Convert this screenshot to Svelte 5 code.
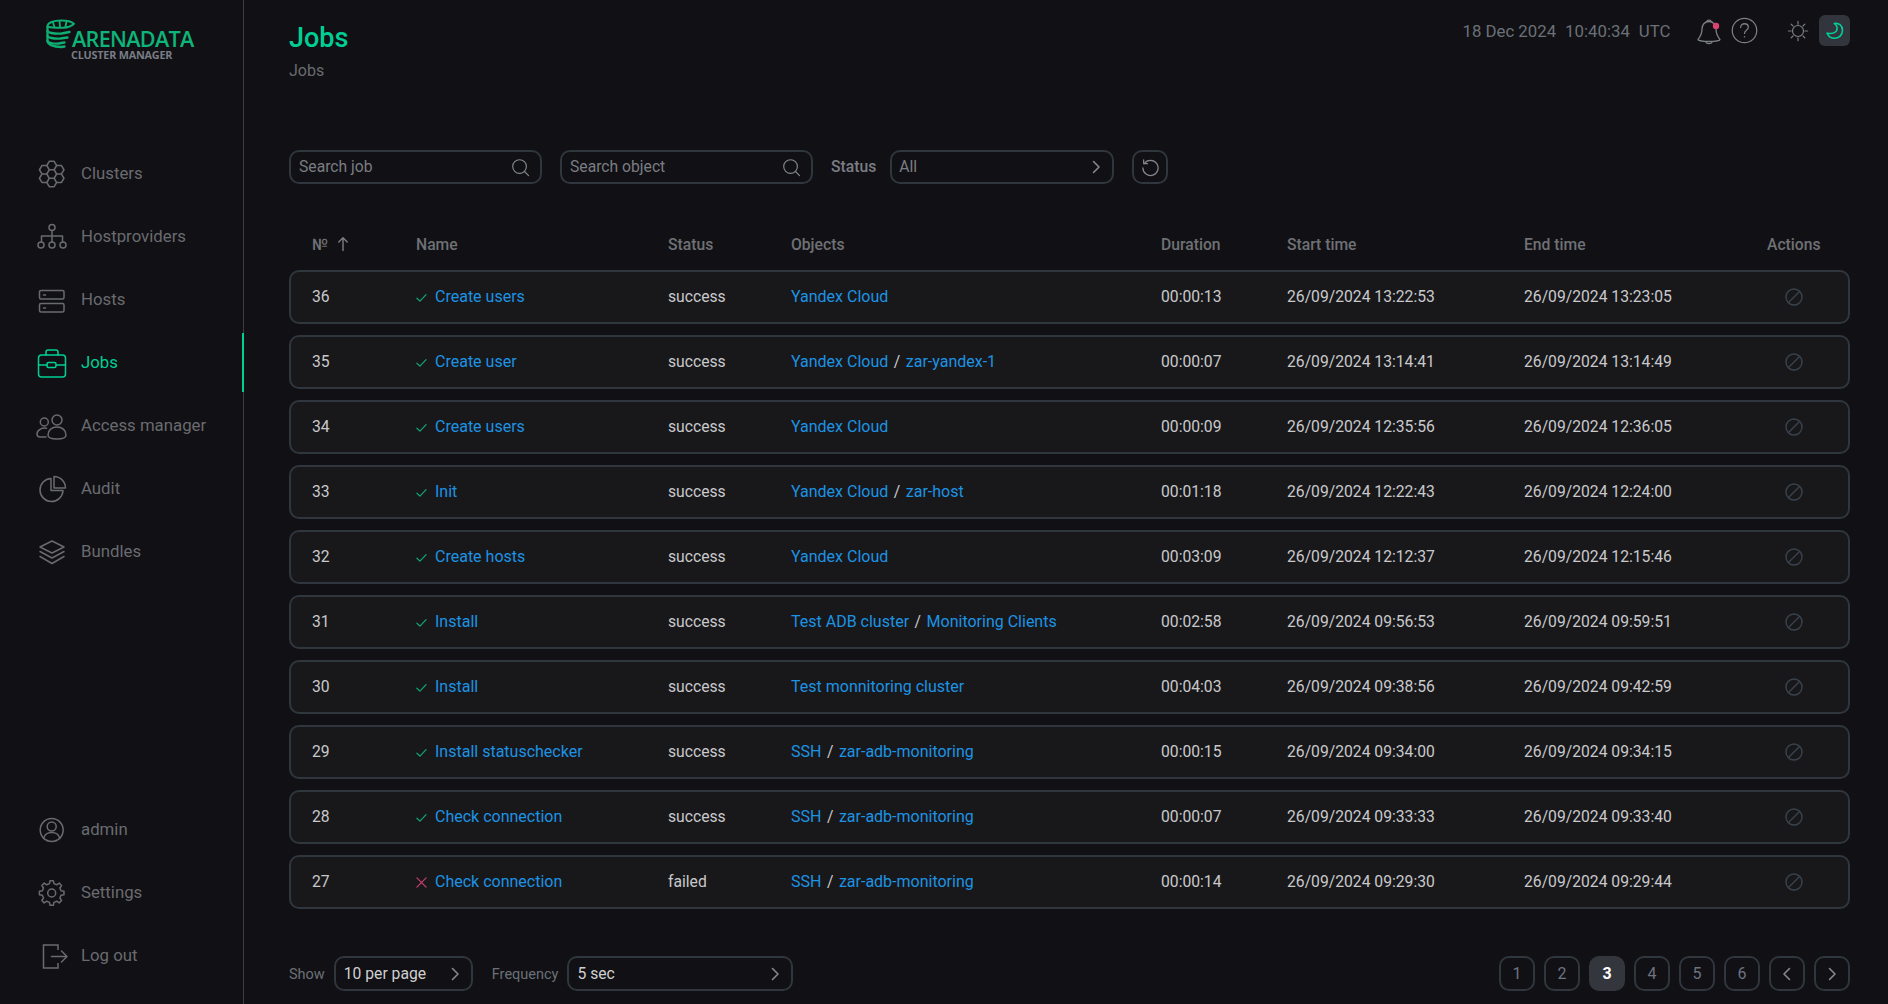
<script>
  const hex = (cx, cy, r = 4.9) => {
    const p = [];
    for (let i = 0; i < 6; i++) {
      const a = (Math.PI / 3) * i;
      p.push(`${(cx + r * Math.cos(a)).toFixed(2)} ${(cy + r * Math.sin(a)).toFixed(2)}`);
    }
    return 'M' + p.join('L') + 'Z';
  };
  const flower = [[14.7, 15], [14.7, 6.5], [14.7, 23.5], [7.35, 10.75], [22.05, 10.75], [7.35, 19.25], [22.05, 19.25]]
    .map(([x, y]) => hex(x, y)).join('');

  const gear = (() => {
    const cx = 14.7, cy = 15, n = 8, out = 12.4, inn = 9.6;
    const p = [];
    for (let i = 0; i < n; i++) {
      const s = (2 * Math.PI / n) * i - Math.PI / 2;
      const w = (2 * Math.PI / n);
      [[-0.30, inn], [-0.17, out], [0.17, out], [0.30, inn]].forEach(([t, r]) => {
        const a = s + t * w;
        p.push(`${(cx + r * Math.cos(a)).toFixed(2)} ${(cy + r * Math.sin(a)).toFixed(2)}`);
      });
    }
    return 'M' + p.join('L') + 'Z';
  })();

  const nav = [
    { label: 'Clusters', icon: 'clusters' },
    { label: 'Hostproviders', icon: 'hostproviders' },
    { label: 'Hosts', icon: 'hosts' },
    { label: 'Jobs', icon: 'jobs', active: true },
    { label: 'Access manager', icon: 'access' },
    { label: 'Audit', icon: 'audit' },
    { label: 'Bundles', icon: 'bundles' }
  ];
  const bottomNav = [
    { label: 'admin', icon: 'admin' },
    { label: 'Settings', icon: 'settings' },
    { label: 'Log out', icon: 'logout' }
  ];

  const columns = ['Name', 'Status', 'Objects', 'Duration', 'Start time', 'End time'];

  const rows = [
    [36, 'Create users', 'success', ['Yandex Cloud'], '00:00:13', '26/09/2024 13:22:53', '26/09/2024 13:23:05'],
    [35, 'Create user', 'success', ['Yandex Cloud', 'zar-yandex-1'], '00:00:07', '26/09/2024 13:14:41', '26/09/2024 13:14:49'],
    [34, 'Create users', 'success', ['Yandex Cloud'], '00:00:09', '26/09/2024 12:35:56', '26/09/2024 12:36:05'],
    [33, 'Init', 'success', ['Yandex Cloud', 'zar-host'], '00:01:18', '26/09/2024 12:22:43', '26/09/2024 12:24:00'],
    [32, 'Create hosts', 'success', ['Yandex Cloud'], '00:03:09', '26/09/2024 12:12:37', '26/09/2024 12:15:46'],
    [31, 'Install', 'success', ['Test ADB cluster', 'Monitoring Clients'], '00:02:58', '26/09/2024 09:56:53', '26/09/2024 09:59:51'],
    [30, 'Install', 'success', ['Test monnitoring cluster'], '00:04:03', '26/09/2024 09:38:56', '26/09/2024 09:42:59'],
    [29, 'Install statuschecker', 'success', ['SSH', 'zar-adb-monitoring'], '00:00:15', '26/09/2024 09:34:00', '26/09/2024 09:34:15'],
    [28, 'Check connection', 'success', ['SSH', 'zar-adb-monitoring'], '00:00:07', '26/09/2024 09:33:33', '26/09/2024 09:33:40'],
    [27, 'Check connection', 'failed', ['SSH', 'zar-adb-monitoring'], '00:00:14', '26/09/2024 09:29:30', '26/09/2024 09:29:44']
  ];
  const pages = [1, 2, 3, 4, 5, 6];
</script>

{#snippet navIcon(name)}
  <svg class="nav-icon" viewBox="0 0 30 30" fill="none" stroke="currentColor" stroke-width="1.5" stroke-linecap="round" stroke-linejoin="round">
    {#if name === 'clusters'}
      <path d={flower} />
    {:else if name === 'hostproviders'}
      <circle cx="15" cy="5.5" r="3" /><path d="M15 8.5V20M15 14H4.5V20M15 14H25.5V20" />
      <circle cx="4" cy="23" r="3" /><circle cx="15" cy="23" r="3" /><circle cx="26" cy="23" r="3" />
    {:else if name === 'hosts'}
      <rect x="2.5" y="5.5" width="24.5" height="8.5" rx="1.5" /><rect x="2.5" y="18.5" width="24.5" height="8.5" rx="1.5" />
      <path d="M6.5 10H8.5M6.5 23H8.5" />
    {:else if name === 'jobs'}
      <rect x="1.5" y="7" width="27" height="22" rx="3" />
      <path d="M9 7V4a2 2 0 0 1 2-2h8a2 2 0 0 1 2 2v3M1.5 17H10M19.5 17H28.5" />
      <rect x="10" y="14.5" width="9" height="5" rx="1.5" />
    {:else if name === 'access'}
      <circle cx="20" cy="9" r="5" />
      <path d="M11 24c0-5 4-8 9-8s9 3 9 8c0 2.5-4 4-9 4s-9-1.5-9-4z" />
      <circle cx="7.3" cy="11" r="4" />
      <path d="M9.5 17.3C5 16.3 0 19 0 23c0 2 1 3 3 3h6" />
    {:else if name === 'audit'}
      <path d="M14 4.5a11.5 11.5 0 1 0 12 12H14z" />
      <path d="M17 2.5a11.5 11.5 0 0 1 11.5 11.5H17z" />
    {:else if name === 'bundles'}
      <path d="M15 4l12 6-12 6-12-6z" /><path d="M3 14.5l12 6.5 12-6.5" /><path d="M3 19.5l12 7 12-7" />
    {:else if name === 'admin'}
      <circle cx="14.7" cy="15" r="11.5" /><circle cx="14.7" cy="11.5" r="4.5" />
      <path d="M6.5 23.5c1-4 4-6 8.2-6s7.2 2 8.2 6" />
    {:else if name === 'settings'}
      <path d={gear} /><circle cx="14.7" cy="15" r="4" />
    {:else if name === 'logout'}
      <path d="M21 9V4H6.5v23H21v-5" stroke-linecap="butt" stroke-linejoin="miter" /><path d="M14.5 15.5H30M24.5 10l5.500 5.500-5.500 5.500" />
    {/if}
  </svg>
{/snippet}

{#snippet searchIcon()}
  <svg class="field-icon" viewBox="0 0 20 20" fill="none" stroke="#84888e" stroke-width="1.2" stroke-linecap="round">
    <circle cx="9" cy="9" r="7.2" /><path d="M14.2 14.2L18.5 18.5" />
  </svg>
{/snippet}

{#snippet chevron()}
  <svg class="chevron" viewBox="0 0 12 16" fill="none" stroke="#84888e" stroke-width="1.6" stroke-linecap="round" stroke-linejoin="round">
    <path d="M3.5 2.5L9 8l-5.500 5.500" />
  </svg>
{/snippet}

<div class="app">
  <aside class="sidebar">
    <div class="logo">
      <svg class="logo-mark" viewBox="0 0 30 30" fill="none" stroke="#0fae72" stroke-width="2.3" stroke-linecap="round" stroke-linejoin="round">
        <path d="M1.5 7.5C1.5 3.5 8 1.5 15 1.5c5.500 0 10.500 1 13 3.200-2.500 2.500-6 3.800-11 4-7 .2-15.500-.5-15.500-1.200z" stroke-width="2" />
        <path d="M7 3.5l1.5 4.500M13.5 2l.5 5.500M20.5 2.5L19.5 7.500" stroke-width="1.8" />
        <path d="M1.5 7.5V12c0 1.500 6 3 14 2.500l8-1.500" />
        <path d="M1.5 12V17c0 1.500 6 3 13 2.500l7-1" />
        <path d="M1.5 17v5c0 1.500 6 3 11 2.500l6-1" />
        <path d="M1.5 22c0 3 5 6 14 6l3-.5" />
      </svg>
      <div class="logo-text">
        <span class="logo-name">ARENADATA</span>
        <span class="logo-sub">CLUSTER MANAGER</span>
      </div>
    </div>
    <nav class="nav">
      {#each nav as item}
        <div class="nav-item" class:active={item.active}>
          {@render navIcon(item.icon)}
          <span>{item.label}</span>
        </div>
      {/each}
    </nav>
    <nav class="nav bottom">
      {#each bottomNav as item}
        <div class="nav-item">
          {@render navIcon(item.icon)}
          <span>{item.label}</span>
        </div>
      {/each}
    </nav>
  </aside>

  <main class="main">
    <header class="top">
      <div class="heading">
        <h1>Jobs</h1>
        <div class="crumb">Jobs</div>
      </div>
      <div class="top-right">
        <div class="clock"><span>18 Dec 2024</span><span>10:40:34</span><span>UTC</span></div>
        <svg class="bell" viewBox="0 0 26 28" fill="none" stroke="#7c7f84" stroke-width="1.3" stroke-linecap="round" stroke-linejoin="round">
          <path d="M13 4.5c-4.500 0-7 3.500-7 7.500 0 5-2 8-4 10.500 0 1 5 2 11 2s11-1 11-2c-2-2.500-4-5.500-4-10.500 0-4-2.500-7.500-7-7.500z" />
          <path d="M10.8 4.8C11 2.5 15 2.5 15.2 4.8M10 25.2c.5 2 5.500 2 6 0" />
          <circle cx="20" cy="9" r="3.2" fill="#d9436f" stroke="none" />
        </svg>
        <svg class="help" viewBox="0 0 28 28" fill="none" stroke="#7c7f84" stroke-width="1.3" stroke-linecap="round">
          <circle cx="14" cy="14" r="12.7" />
          <path d="M10 11c0-2.500 1.800-4 4-4s4 1.500 4 3.700c0 3-4 3.300-4 6.300" />
          <circle cx="14" cy="20.5" r=".8" fill="#7c7f84" stroke="none" />
        </svg>
        <svg class="sun" viewBox="0 0 24 24" fill="none" stroke="#7c7f84" stroke-width="1.3" stroke-linecap="round">
          <circle cx="12" cy="12" r="6" />
          <path d="M12 1.5V4.500M12 19.500V22.500M1.500 12H4.500M19.500 12H22.500M4.500 4.500L6.500 6.500M17.500 17.500L19.500 19.500M4.500 19.500L6.500 17.500M17.500 6.500L19.500 4.500" />
        </svg>
        <div class="moon-box">
          <svg viewBox="0 0 20 20" fill="none" stroke="#00d097" stroke-width="1.6" stroke-linecap="round" stroke-linejoin="round">
            <path d="M9.5 2.5c4 -.8 8 1.800 8 6.800 0 4.700-3.700 8-8 8-3.300 0-6-1.800-7.300-5" />
            <path d="M9.5 2.5c1.500 1.200 3 3.500 2.500 6-.5 3-4.500 4.500-9.800 3.800" />
          </svg>
        </div>
      </div>
    </header>

    <section class="filters">
      <div class="field search">
        <span>Search job</span>
        {@render searchIcon()}
      </div>
      <div class="field search">
        <span>Search object</span>
        {@render searchIcon()}
      </div>
      <label class="filter-label" for="status">Status</label>
      <div class="field status" id="status">
        <span>All</span>
        {@render chevron()}
      </div>
      <div class="reset">
        <svg viewBox="0 0 20 20" fill="none" stroke="#84888e" stroke-width="1.3" stroke-linecap="round" stroke-linejoin="round">
          <path d="M3.5 5.8A8 8 0 1 1 2 10.5" />
          <path d="M2.8 2v4h4" />
        </svg>
      </div>
    </section>

    <div class="table-head cols">
      <div class="num-head">
        <span>№</span>
        <svg viewBox="0 0 12 16" fill="none" stroke="#7c7f84" stroke-width="1.4" stroke-linecap="round" stroke-linejoin="round">
          <path d="M6 14.5V2M1.8 6L6 1.8 10.2 6" />
        </svg>
      </div>
      {#each columns as c}<div>{c}</div>{/each}
      <div class="actions-head">Actions</div>
    </div>

    <div class="rows">
      {#each rows as r}
        <div class="row cols">
          <div>{r[0]}</div>
          <div class="name">
            {#if r[2] === 'success'}
              <svg class="state" viewBox="0 0 12 12" fill="none" stroke="#12a96f" stroke-width="1.3" stroke-linecap="round" stroke-linejoin="round">
                <path d="M1 6.8L4.3 10 11 2.8" />
              </svg>
            {:else}
              <svg class="state" viewBox="0 0 12 12" fill="none" stroke="#c9406f" stroke-width="1.3" stroke-linecap="round">
                <path d="M1 1L11 11M11 1L1 11" />
              </svg>
            {/if}
            <a href="#job">{r[1]}</a>
          </div>
          <div>{r[2]}</div>
          <div class="objects">
            {#each r[3] as o, i}
              {#if i > 0}<span class="sep">/</span>{/if}
              <a href="#object">{o}</a>
            {/each}
          </div>
          <div>{r[4]}</div>
          <div>{r[5]}</div>
          <div>{r[6]}</div>
          <div class="action">
            <svg viewBox="0 0 18 18" fill="none" stroke="#3a434d" stroke-width="1.4" stroke-linecap="round">
              <circle cx="9" cy="9" r="8" /><path d="M14.5 3.5L3.5 14.5" />
            </svg>
          </div>
        </div>
      {/each}
    </div>

    <footer class="footer">
      <div class="footer-left">
        <span class="small-label">Show</span>
        <div class="field per-page"><span>10 per page</span>{@render chevron()}</div>
        <span class="small-label freq">Frequency</span>
        <div class="field frequency"><span>5 sec</span>{@render chevron()}</div>
      </div>
      <div class="pager">
        {#each pages as p}
          <button class="page" class:current={p === 3}>{p}</button>
        {/each}
        <button class="page" aria-label="Previous">
          <svg viewBox="0 0 12 16" fill="none" stroke="#84888e" stroke-width="1.6" stroke-linecap="round" stroke-linejoin="round"><path d="M8.5 2.5L3 8l5.500 5.500" /></svg>
        </button>
        <button class="page" aria-label="Next">
          <svg viewBox="0 0 12 16" fill="none" stroke="#84888e" stroke-width="1.6" stroke-linecap="round" stroke-linejoin="round"><path d="M3.5 2.5L9 8l-5.500 5.500" /></svg>
        </button>
      </div>
    </footer>
  </main>
</div>

<style>
  :global(body) {
    margin: 0;
    background: #111014;
    font-family: Roboto, "Liberation Sans", sans-serif;
    font-size: 15.7px;
    color: #c9c9cb;
  }
  .app {
    display: flex;
    height: 1004px;
    overflow: hidden;
    background: #111014;
  }

  /* Sidebar */
  .sidebar {
    width: 244px;
    box-sizing: border-box;
    flex: none;
    border-right: 1px solid #3b3e42;
    display: flex;
    flex-direction: column;
    padding-bottom: 19px;
  }
  .logo {
    height: 144px;
    box-sizing: border-box;
    padding: 19px 0 0 46px;
    display: flex;
    align-items: flex-start;
  }
  .logo-mark {
    width: 30px;
    height: 30px;
    flex: none;
    overflow: visible;
  }
  .logo-text {
    display: flex;
    flex-direction: column;
    margin-left: -4px;
  }
  .logo-name {
    font-family: "Open Sans", Lato, sans-serif;
    font-size: 21.6px;
    line-height: 20px;
    margin-top: 10px;
    letter-spacing: -0.7px;
    color: #0fb478;
    font-weight: 600;
  }
  .logo-sub {
    font-family: "Open Sans", Lato, sans-serif;
    font-size: 10.8px;
    line-height: 12px;
    margin-left: -1px;
    font-weight: 700;
    letter-spacing: -0.2px;
    color: #797d84;
  }
  .nav {
    display: flex;
    flex-direction: column;
    gap: 4px;
  }
  .bottom {
    margin-top: auto;
  }
  .nav-item {
    height: 59px;
    display: flex;
    align-items: center;
    gap: 14px;
    padding-left: 37px;
    color: #696b70;
    font-size: 16.8px;
    margin-right: -1px;
    border-right: 2px solid transparent;
  }
  .nav-item span {
    margin-bottom: 2px;
  }
  .nav-item.active {
    color: #00cf95;
    border-right-color: #00cf95;
  }
  .nav-icon {
    width: 30px;
    height: 30px;
    flex: none;
    overflow: visible;
  }

  /* Main */
  .main {
    flex: 1;
    min-width: 0;
    padding: 0 38px 0 45px;
    display: flex;
    flex-direction: column;
  }
  .top {
    height: 150px;
    flex: none;
    display: flex;
    justify-content: space-between;
    align-items: flex-start;
  }
  h1 {
    margin: 21px 0 0;
    font-size: 27px;
    line-height: 34px;
    font-weight: 500;
    color: #00cf95;
  }
  .crumb {
    margin-top: 6px;
    font-size: 16px;
    line-height: 20px;
    color: #696b70;
  }
  .top-right {
    display: flex;
    align-items: center;
    height: 31px;
    margin-top: 15px;
  }
  .clock {
    display: flex;
    gap: 9px;
    color: #6b7078;
    font-size: 16.8px;
    margin-right: 26px;
  }
  .bell {
    width: 26px;
    height: 28px;
    flex: none;
  }
  .help {
    width: 27px;
    height: 27px;
    margin-left: 8.6px;
    flex: none;
  }
  .sun {
    width: 22px;
    height: 22px;
    margin-left: 29px;
    flex: none;
  }
  .moon-box {
    width: 31px;
    height: 31px;
    margin-left: 10px;
    border-radius: 6px;
    background: #32353b;
    display: flex;
    align-items: center;
    justify-content: center;
  }
  .moon-box svg {
    width: 20px;
    height: 20px;
  }

  /* Filters */
  .filters {
    display: flex;
    align-items: center;
    height: 34px;
    flex: none;
  }
  .field {
    height: 34px;
    box-sizing: border-box;
    border: 2px solid #30363d;
    border-radius: 10px;
    display: flex;
    align-items: center;
    justify-content: space-between;
    padding: 0 10px 0 8px;
    color: #7a7d83;
  }
  .filters .field span,
  .filter-label {
    margin-bottom: 2px;
  }
  .search {
    width: 253px;
    margin-right: 18px;
  }
  .field-icon {
    width: 19px;
    height: 19px;
  }
  .chevron {
    width: 12px;
    height: 16px;
    flex: none;
  }
  .filter-label {
    font-weight: 500;
    color: #7a7d83;
    margin-right: 14px;
  }
  .status {
    width: 224px;
    padding-left: 7px;
  }
  .reset {
    width: 36px;
    height: 34px;
    margin-left: 18px;
    box-sizing: border-box;
    border: 2px solid #30363d;
    border-radius: 10px;
    display: flex;
    align-items: center;
    justify-content: center;
  }
  .reset svg {
    width: 19px;
    height: 19px;
  }

  /* Table */
  .cols {
    display: grid;
    grid-template-columns: 104px 252px 123px 370px 126px 237px 243px 53px;
    align-items: center;
  }
  .table-head {
    height: 36px;
    margin: 42px 0 8px;
    padding-left: 23px;
    font-weight: 500;
    color: #6e7175;
    flex: none;
  }
  .num-head {
    display: flex;
    align-items: center;
    gap: 9px;
  }
  .num-head svg {
    width: 12px;
    height: 16px;
  }
  .actions-head {
    text-align: center;
  }
  .rows {
    display: flex;
    flex-direction: column;
    gap: 11px;
    flex: none;
  }
  .row {
    height: 54px;
    box-sizing: border-box;
    border: 2px solid #30363d;
    border-radius: 10px;
    background: #18181b;
    padding: 0 0 2px 21px;
  }
  .name {
    display: flex;
    align-items: center;
    gap: 8px;
  }
  .state {
    width: 11px;
    height: 11px;
    flex: none;
    margin-top: 3px;
  }
  a {
    color: #1d93e3;
    text-decoration: none;
    font-size: 16px;
  }
  .objects {
    display: flex;
    align-items: center;
  }
  .sep {
    margin: 0 5.5px;
  }
  .action {
    display: flex;
    justify-content: center;
    margin-top: 2px;
  }
  .action svg {
    width: 18px;
    height: 18px;
  }

  /* Footer */
  .footer {
    margin-top: 47px;
    display: flex;
    justify-content: space-between;
    align-items: center;
    flex: none;
  }
  .footer-left {
    display: flex;
    align-items: center;
  }
  .small-label {
    font-size: 14.5px;
    color: #6b7078;
    margin: 2px 9px 0 0;
  }
  .freq {
    margin-left: 19px;
    font-weight: 400;
  }
  .footer-left .field {
    height: 35px;
    color: #cfcfd1;
  }
  .per-page {
    width: 139px;
  }
  .frequency {
    width: 226px;
  }
  .pager {
    display: flex;
    gap: 9px;
  }
  .page {
    width: 36px;
    height: 35px;
    padding: 0;
    box-sizing: border-box;
    border: 2px solid #30363d;
    border-radius: 10px;
    background: transparent;
    color: #6c7480;
    font: inherit;
    font-size: 16px;
    display: flex;
    align-items: center;
    justify-content: center;
  }
  .page svg {
    width: 12px;
    height: 16px;
  }
  .page.current {
    background: #33363c;
    border-color: #33363c;
    color: #fff;
    font-weight: 700;
  }
</style>
